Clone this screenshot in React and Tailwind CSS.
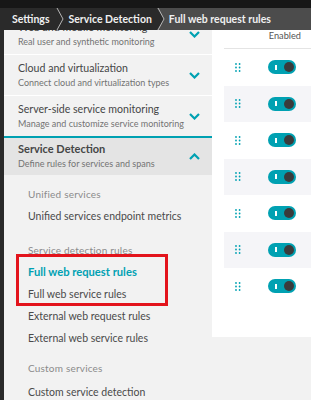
import React from "react"

const teal = "#00a1b2"

function Chevron({ up }) {
    return (
        <svg width="11" height="7" viewBox="0 0 11 7" className="shrink-0">
            <polyline
                points={up ? "1,6 5.5,1.5 10,6" : "1,1 5.5,5.5 10,1"}
                fill="none"
                stroke={teal}
                strokeWidth="2.2"
            />
        </svg>
    )
}

function Group({ title, subtitle, open, last }) {
    return (
        <div
            className={
                "flex items-center justify-between pl-[14px] pr-[12px] whitespace-nowrap " +
                (open ? "bg-[#e4e4e4] pt-[3px] pb-[4px]" : "pt-[5px] pb-[5px] " + (last ? "" : "border-b border-white"))
            }
        >
            <div>
                <div className={"leading-[16px] text-[#454646] " + (open ? "font-bold text-[11px]" : "text-[10.6px]")}>
                    {title}
                </div>
                <div className="text-[9px] leading-[14px] text-[#737373]">{subtitle}</div>
            </div>
            <Chevron up={open} />
        </div>
    )
}

function Header({ children, className }) {
    return (
        <div className={"pl-[24px] text-[10px] tracking-[0.2px] leading-[14px] text-[#8b8b8b] " + className}>
            {children}
        </div>
    )
}

function Item({ children, active }) {
    return (
        <div
            className={
                "pl-[24px] leading-[22px] whitespace-nowrap " +
                (active ? "font-bold text-[#00a1b2] text-[11.2px]" : "text-[#4a4a4a] text-[10.5px]")
            }
        >
            {children}
        </div>
    )
}

function Handle() {
    return (
        <svg width="6" height="9" viewBox="0 0 6 9">
            {[1, 4.5, 8].map((y) => (
                <g key={y}>
                    <circle cx="1" cy={y} r="0.9" fill={teal} />
                    <circle cx="4.6" cy={y} r="0.9" fill={teal} />
                </g>
            ))}
        </svg>
    )
}

function Toggle() {
    return (
        <div className="relative w-[28px] h-[14px] rounded-full bg-[#00a1b2]">
            <div className="absolute left-[7px] top-[4.5px] w-[1.5px] h-[5px] bg-white" />
            <div className="absolute right-[2px] top-[2px] w-[10px] h-[10px] rounded-full bg-[#3a3b3c]" />
        </div>
    )
}

export default function App() {
    const rows = [0, 1, 2, 3, 4, 5, 6]

    return (
        <div className="w-[311px] h-[400px] overflow-hidden flex flex-col bg-[#f2f2f2] [font-family:Lato,'Liberation_Sans',sans-serif]">
            {/* top bar */}
            <div className="h-[8px] bg-[#171717] shrink-0" />

            {/* breadcrumb */}
            <div className="h-[22px] flex shrink-0 text-[10.5px] font-bold text-[#f0f0f0] leading-[22px] whitespace-nowrap">
                <div className="bg-[#2a2a2a] pl-[12px] pr-[6px]">Settings</div>
                <svg width="8" height="22" viewBox="0 0 8 22" className="bg-[#2a2a2a] shrink-0">
                    <polyline points="1,0 7,11 1,22" fill="none" stroke="#b5b5b5" strokeWidth="1" />
                </svg>
                <div className="bg-[#2a2a2a] pl-[5px] pr-[5px]">Service Detection</div>
                <svg width="8" height="22" viewBox="0 0 8 22" className="shrink-0">
                    <rect width="8" height="22" fill="#4c4c4c" />
                    <polygon points="0,0 7,11 0,22" fill="#2a2a2a" />
                    <polyline points="1,0 7,11 1,22" fill="none" stroke="#b5b5b5" strokeWidth="1" />
                </svg>
                <div className="flex-1 bg-[#4c4c4c] pl-[4px]">Full web request rules</div>
            </div>

            <div className="flex flex-1 min-h-0">
                <div className="w-[4px] bg-[#2a2a2a] shrink-0" />

                {/* sidebar */}
                <div className="w-[208px] shrink-0 overflow-hidden relative">
                    <div className="-mt-[16px]">
                        <Group title="Web and mobile monitoring" subtitle="Real user and synthetic monitoring" />
                        <Group title="Cloud and virtualization" subtitle="Connect cloud and virtualization types" />
                        <Group title="Server-side service monitoring" subtitle="Manage and customize service monitoring" last />
                        <div className="h-[2px] bg-[#00a1b2]" />
                        <Group title="Service Detection" subtitle="Define rules for services and spans" open />

                        <Header className="mt-[12px]">Unified services</Header>
                        <div className="mt-[4px]">
                            <Item>Unified services endpoint metrics</Item>
                        </div>

                        <Header className="mt-[16px]">Service detection rules</Header>
                        <div className="mt-[4px]">
                            <Item active>Full web request rules</Item>
                            <Item>Full web service rules</Item>
                            <Item>External web request rules</Item>
                            <Item>External web service rules</Item>
                        </div>

                        <Header className="mt-[12px]">Custom services</Header>
                        <div className="mt-[6px]">
                            <Item>Custom service detection</Item>
                        </div>
                    </div>

                    {/* annotation box */}
                    <div className="absolute left-[12px] top-[224px] w-[152px] h-[52px] border-[3px] border-[#e3141c]" />
                </div>

                {/* right panel */}
                <div className="flex-1 flex flex-col">
                    <div className="bg-white h-[307px] pl-[12px]">
                        <div className="h-[19px] border-b border-[#e4e4e4] flex justify-end pr-[10px] text-[9.2px] leading-[11px] text-[#555]">
                            Enabled
                        </div>
                        {rows.map((i) => (
                            <div
                                key={i}
                                className={"h-[36.5px] flex items-center " + (i % 2 === 1 ? "bg-[#f5f5f8]" : "")}
                            >
                                <div className="ml-[11px] flex items-center">
                                    <Handle />
                                </div>
                                <div className="ml-[27px]">
                                    <Toggle />
                                </div>
                            </div>
                        ))}
                    </div>
                </div>
            </div>
        </div>
    )
}
